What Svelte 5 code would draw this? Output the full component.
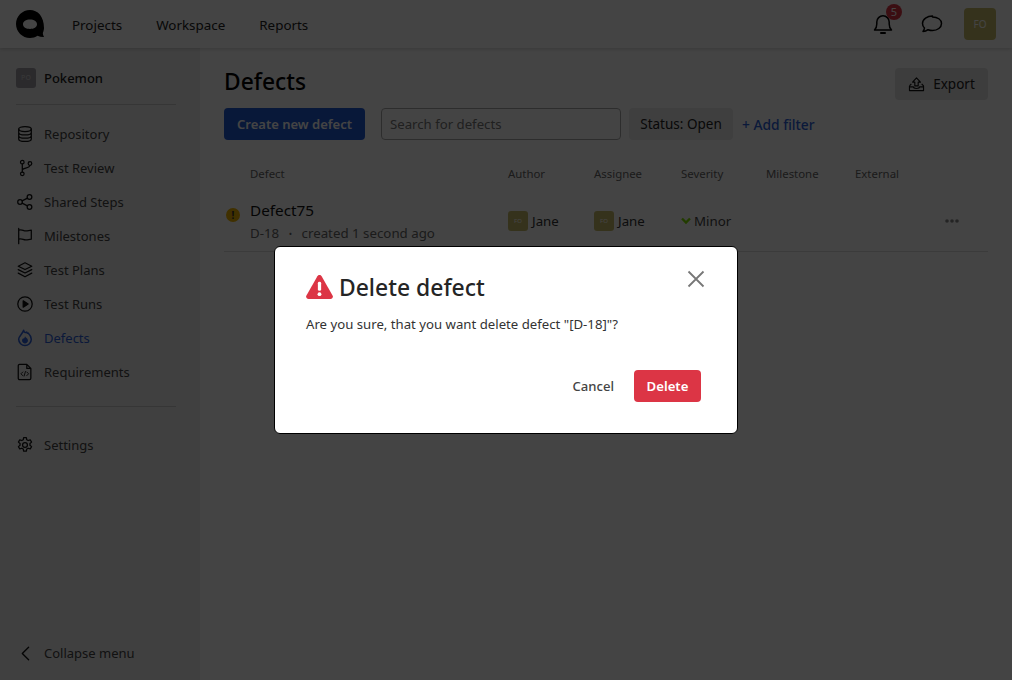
<script lang="ts">
	const nav = ['Projects', 'Workspace', 'Reports'];
	const menu = [
		{ label: 'Repository', icon: 'db' },
		{ label: 'Test Review', icon: 'branch' },
		{ label: 'Shared Steps', icon: 'share' },
		{ label: 'Milestones', icon: 'flag' },
		{ label: 'Test Plans', icon: 'layers' },
		{ label: 'Test Runs', icon: 'play' },
		{ label: 'Defects', icon: 'flame', active: true },
		{ label: 'Requirements', icon: 'file' },
	];
	const columns = ['Defect', 'Author', 'Assignee', 'Severity', 'Milestone', 'External'];
</script>

{#snippet icon(name: string)}
	<svg class="menu-icon" viewBox="0 0 20 20" fill="none" stroke="currentColor" stroke-width="1.4" stroke-linecap="round" stroke-linejoin="round">
		{#if name === 'db'}
			<ellipse cx="10" cy="4.5" rx="7" ry="2.8" />
			<path d="M3 4.500v11c0 1.500 3.100 2.800 7 2.800s7-1.300 7-2.800v-11M3 8.200c0 1.500 3.100 2.800 7 2.800s7-1.300 7-2.800M3 11.900c0 1.500 3.100 2.800 7 2.800s7-1.300 7-2.800" />
		{:else if name === 'branch'}
			<circle cx="7" cy="3.500" r="2" />
			<circle cx="7" cy="16.500" r="2" />
			<circle cx="15.500" cy="5" r="2" />
			<path d="M7 5.500v9M7 12.500c0-3 8.300-1.500 8.500-5.500" />
		{:else if name === 'share'}
			<circle cx="4.500" cy="10" r="2.600" />
			<circle cx="15" cy="4.500" r="2.600" />
			<circle cx="15" cy="15.500" r="2.600" />
			<path d="M6.800 8.800l5.900-3.100M6.800 11.200l5.900 3.100" />
		{:else if name === 'flag'}
			<path d="M3 1.500v17M3 3.500c4-1.500 5 1 8 .8 2 0 4-.8 6-.8v10c-2 0-4 .8-6 .8-3 .2-4-2-8-.8" />
		{:else if name === 'layers'}
			<path d="M10 2l7.500 3.800L10 9.500 2.500 5.800zM2.500 9.600L10 13.300l7.500-3.700M2.500 13.500L10 17.500l7.500-4" />
		{:else if name === 'play'}
			<circle cx="10" cy="10" r="8" />
			<path d="M8 6.500l5.500 3.500L8 13.500z" fill="currentColor" />
		{:else if name === 'flame'}
			<path d="M8.500 1.500c.5 2.500 2 3 3.500 2 .2 1 .8 1.500 1.500 1 2 2 3.500 4.500 3.500 7 0 3.800-3.200 6.800-7 6.800s-7-3-7-6.800C3 7.500 7 6 8.500 1.500z" stroke-width="1.700" />
			<path d="M10 8c.5 1.500 3.300 2.200 3.300 4.800 0 1.800-1.500 3.200-3.300 3.200s-3.300-1.400-3.300-3.200c0-1 .6-1.800 1.200-2.500.5.700 1.600.5 2.100-2.300z" fill="currentColor" stroke="none" />
		{:else if name === 'file'}
			<path d="M4 1.500h8l4.500 4.500v11c0 .800-.700 1.500-1.500 1.500H4c-.800 0-1.500-.700-1.500-1.500V3c0-.800.700-1.500 1.500-1.500zM12 1.500V6h4.500" />
			<path d="M7.500 10l-2 2 2 2M12 10l2 2-2 2M10.500 9.500l-1.500 5" stroke-width="1" />
		{:else if name === 'gear'}
			<circle cx="10" cy="10" r="2.700" />
			<path d="M8.500 1.800h3l.5 2.400 1.500.8 2.300-.8 1.500 2.600-1.800 1.600v1.800l1.800 1.600-1.500 2.600-2.300-.8-1.500.8-.5 2.400h-3l-.5-2.400-1.500-.8-2.300.8-1.500-2.600 1.800-1.600V8.400L2.700 6.800l1.500-2.600 2.300.8 1.500-.8z" />
		{/if}
	</svg>
{/snippet}

<div class="page">
	<header class="topbar">
		<svg class="logo" viewBox="0 0 28 28">
			<path fill-rule="evenodd" d="M14 0C6.300 0 0 6.300 0 14s6.300 14 14 14c2.800 0 5.300-.8 7.500-2.200 2 .9 4.300 1.300 6.500 1.200-.8-1.200-1.100-2.600-1.200-4 .8-1.800 1.200-3.800 1.200-5C28 6.300 21.700 0 14 0zm0 9.500c4 0 7 1.800 7 4.800s-3 4.700-7 4.700-7-1.700-7-4.700 3-4.800 7-4.800z" />
		</svg>
		<nav class="top-nav">
			{#each nav as item}
				<span>{item}</span>
			{/each}
		</nav>
		<div class="top-actions">
			<div class="bell">
				<svg viewBox="0 0 20 22" fill="none" stroke="currentColor" stroke-width="1.500" stroke-linecap="round" stroke-linejoin="round">
					<path d="M1.500 17h17c-1.500-1.500-2.300-3-2.300-6V9a6.200 6.200 0 0 0-12.400 0v2c0 3-.800 4.500-2.300 6z" />
					<path d="M8 20h4" stroke-width="2" />
				</svg>
				<span class="bell-badge">5</span>
			</div>
			<svg class="chat" viewBox="0 0 22 20" fill="none" stroke="currentColor" stroke-width="1.500" stroke-linejoin="round">
				<path d="M11.500 2C6.300 2 1.500 5 1.500 9.500c0 2 .9 3.500 2 4.500-.2 1.500-1 2.800-1.500 3.500 2 0 3.800-.8 5-1.800 1.400.5 3 .8 4.500.8 5 0 9-3 9-7s-4-6.500-9-6.500z" />
			</svg>
			<div class="avatar">FO</div>
		</div>
	</header>

	<div class="body">
		<aside class="sidebar">
			<div class="project">
				<span class="project-badge">PO</span>
				<span>Pokemon</span>
			</div>
			<div class="divider"></div>
			<ul class="menu">
				{#each menu as item}
					<li class:active={item.active}>
						{@render icon(item.icon)}
						<span>{item.label}</span>
					</li>
				{/each}
			</ul>
			<div class="divider second"></div>
			<div class="menu-row settings">
				{@render icon('gear')}
				<span>Settings</span>
			</div>
			<div class="menu-row collapse">
				<svg class="menu-icon" viewBox="0 0 20 20" fill="none" stroke="currentColor" stroke-width="1.500" stroke-linecap="round" stroke-linejoin="round">
					<path d="M14 3.500L7 10.500l7 7" />
				</svg>
				<span>Collapse menu</span>
			</div>
		</aside>

		<main class="content">
			<div class="title-row">
				<h1>Defects</h1>
				<button class="export">
					<svg viewBox="0 0 18 16" fill="none" stroke="currentColor" stroke-width="1.200" stroke-linejoin="round">
						<path d="M9 1L4.800 5.500h2.400v4h3.600v-4h2.400zM1.500 9.500v5h15v-5l-2-2.200M1.500 9.500l2-2.200M1.500 10.500h4.200c0 1.200 1 1.800 3.300 1.800s3.300-.6 3.300-1.800h4.200" />
					</svg>
					Export
				</button>
			</div>
			<div class="toolbar">
				<button class="primary">Create new defect</button>
				<input class="search" placeholder="Search for defects" />
				<span class="status">Status: Open</span>
				<span class="add-filter">+ Add filter</span>
			</div>
			<div class="grid head">
				<span></span>
				{#each columns as col}
					<span>{col}</span>
				{/each}
			</div>
			<div class="grid row">
				<span class="warn">!</span>
				<div class="defect">
					<div class="defect-name">Defect75</div>
					<div class="defect-meta">D-18 <i>•</i> created 1 second ago</div>
				</div>
				<div class="person"><span class="mini">FO</span>Jane</div>
				<div class="person"><span class="mini">FO</span>Jane</div>
				<div class="severity">
					<svg viewBox="0 0 10 8" fill="none" stroke="currentColor" stroke-width="2.400"><path d="M1 1.500l4 4 4-4" /></svg>
					Minor
				</div>
				<span></span>
				<span></span>
				<svg class="dots" viewBox="0 0 14 4" fill="currentColor">
					<circle cx="2" cy="2" r="1.800" />
					<circle cx="7" cy="2" r="1.800" />
					<circle cx="12" cy="2" r="1.800" />
				</svg>
			</div>
		</main>
	</div>

	<div class="overlay">
		<div class="modal">
			<div class="modal-head">
				<svg class="alert" viewBox="0 0 28 25">
					<path d="M14 0c.9 0 1.700.5 2.200 1.300l11.400 20c.9 1.600-.2 3.700-2.200 3.700H2.600C.6 25-.5 22.900.4 21.300l11.400-20C12.300.5 13.100 0 14 0z" fill="#dc3545" />
					<rect x="12.300" y="7" width="3.400" height="9.500" rx="1.500" fill="#fff" />
					<circle cx="14" cy="20" r="2" fill="#fff" />
				</svg>
				<h2>Delete defect</h2>
				<svg class="close" viewBox="0 0 18 18" fill="none" stroke="currentColor" stroke-width="1.800"><path d="M1.500 1.500l15 15M16.500 1.500l-15 15" /></svg>
			</div>
			<p>Are you sure, that you want delete defect "[D-18]"?</p>
			<div class="modal-actions">
				<button class="cancel">Cancel</button>
				<button class="delete">Delete</button>
			</div>
		</div>
	</div>
</div>

<style>
	:global(body) {
		margin: 0;
		font-family: 'Noto Sans', sans-serif;
	}

	.page {
		position: relative;
		width: 1012px;
		height: 680px;
		overflow: hidden;
		background: #fff;
		color: #1a1a1a;
		display: flex;
		flex-direction: column;
	}

	.topbar {
		height: 48px;
		flex: none;
		display: flex;
		align-items: center;
		padding: 0 16px;
		box-shadow: 0 1px 4px rgba(0, 0, 0, 0.18);
		position: relative;
	}

	.logo {
		width: 28px;
		height: 28px;
		fill: #000;
	}

	.top-nav {
		display: flex;
		gap: 34px;
		margin-left: 28px;
		padding-top: 1px;
		font-size: 13.4px;
		color: #222;
	}

	.top-actions {
		margin-left: auto;
		display: flex;
		align-items: center;
	}

	.bell {
		position: relative;
		width: 20px;
		height: 22px;
		color: #000;
	}

	.bell svg {
		display: block;
		width: 20px;
		height: 22px;
	}

	.bell-badge {
		position: absolute;
		top: -9px;
		left: 13px;
		width: 16px;
		height: 16px;
		border-radius: 50%;
		background: #dc3545;
		color: #fff;
		font-size: 11px;
		line-height: 16px;
		text-align: center;
	}

	.chat {
		width: 22px;
		height: 20px;
		margin-left: 28px;
		color: #000;
	}

	.avatar {
		width: 32px;
		height: 32px;
		margin-left: 21px;
		border-radius: 4px;
		background: #c8bb6a;
		color: #fff;
		font-size: 10px;
		line-height: 32px;
		text-align: center;
	}

	.body {
		flex: 1;
		display: flex;
		min-height: 0;
	}

	.sidebar {
		width: 200px;
		flex: none;
		box-sizing: border-box;
		padding: 20px 24px 0 16px;
		background: #f0f0f0;
		display: flex;
		flex-direction: column;
		font-size: 13px;
		color: #444;
	}

	.project {
		display: flex;
		align-items: center;
		gap: 8px;
		height: 20px;
		font-weight: 500;
		color: #222;
	}

	.project-badge {
		width: 20px;
		height: 20px;
		border-radius: 3px;
		background: #a09ca6;
		color: #ccc;
		font-size: 7px;
		line-height: 20px;
		text-align: center;
	}

	.divider {
		height: 1px;
		background: #ccc;
		margin-top: 16px;
	}

	.menu {
		list-style: none;
		margin: 12px 0 0;
		padding: 0;
	}

	.menu li,
	.menu-row {
		height: 34px;
		display: flex;
		align-items: center;
		gap: 10px;
	}

	.menu li.active {
		color: #2b5fd9;
	}

	.menu-icon {
		width: 18px;
		height: 18px;
		flex: none;
		color: #111;
	}

	.active .menu-icon {
		color: #2b5fd9;
	}

	.divider.second {
		margin-top: 17px;
	}

	.settings {
		margin-top: 21px;
	}

	.collapse {
		margin-top: auto;
		margin-bottom: 10px;
	}

	.content {
		flex: 1;
		min-width: 0;
		padding: 0 24px;
	}

	.title-row {
		display: flex;
		align-items: flex-start;
		justify-content: space-between;
		box-sizing: border-box;
		height: 60px;
		padding-top: 20px;
	}

	h1 {
		margin: 0;
		font-size: 22.8px;
		line-height: 28px;
		font-weight: 500;
		color: #000;
	}

	button {
		font: inherit;
		border: 0;
	}

	.export {
		display: flex;
		align-items: center;
		justify-content: center;
		gap: 8px;
		width: 93px;
		height: 32px;
		padding: 0;
		border-radius: 4px;
		background: #e4e4e4;
		font-size: 13.5px;
		color: #222;
	}

	.export svg {
		width: 17px;
		height: 15px;
		color: #111;
	}

	.toolbar {
		display: flex;
		align-items: center;
		height: 32px;
	}

	.primary {
		width: 141px;
		height: 32px;
		padding: 0;
		border-radius: 4px;
		background: #1f5ad6;
		color: #fff;
		font-size: 13px;
		font-weight: 600;
	}

	.search {
		box-sizing: border-box;
		width: 240px;
		height: 32px;
		margin-left: 16px;
		padding: 0 8px;
		border: 1px solid #aaa;
		border-radius: 4px;
		background: transparent;
		font: inherit;
		font-size: 13.2px;
	}

	.search::placeholder {
		color: #777;
	}

	.status {
		margin-left: 8px;
		width: 104px;
		height: 32px;
		border-radius: 4px;
		background: #ececec;
		font-size: 13.5px;
		line-height: 32px;
		text-align: center;
		color: #222;
	}

	.add-filter {
		margin-left: 9px;
		padding-top: 1px;
		font-size: 13.8px;
		font-weight: 500;
		color: #2b5fd9;
	}

	.grid {
		display: grid;
		grid-template-columns: 26px 258px 86px 87px 85px 89px 1fr;
	}

	.head {
		margin-top: 25px;
		font-size: 11.4px;
		line-height: 18px;
		color: #666;
	}

	.row {
		grid-template-columns: 26px 258px 86px 87px 85px 89px 1fr 43px;
		margin-top: 10px;
		height: 59px;
		box-sizing: border-box;
		padding-bottom: 3px;
		border-bottom: 1px solid #ddd;
		align-items: center;
		font-size: 13.3px;
		color: #333;
	}

	.warn {
		align-self: start;
		width: 14px;
		height: 14px;
		margin: 15px 0 0 2px;
		border-radius: 50%;
		background: #f0b400;
		color: #333;
		font-size: 10px;
		font-weight: 700;
		line-height: 14px;
		text-align: center;
	}

	.defect {
		padding-top: 5px;
	}

	.defect-name {
		color: #111;
		font-size: 15.3px;
		line-height: 20px;
	}

	.defect-meta {
		font-size: 13.3px;
		line-height: 27px;
		color: #666;
	}

	.defect-meta i {
		font-style: normal;
		font-size: 9px;
		margin: 0 6px;
		vertical-align: 1px;
	}

	.person {
		display: flex;
		align-items: center;
		gap: 4px;
	}

	.mini {
		width: 20px;
		height: 20px;
		border-radius: 3px;
		background: #c8bb6a;
		color: #fff;
		font-size: 6px;
		line-height: 20px;
		text-align: center;
	}

	.severity {
		display: flex;
		align-items: center;
		gap: 3px;
		color: #444;
	}

	.severity svg {
		width: 10px;
		height: 8px;
		color: #80e000;
	}

	.dots {
		width: 14px;
		height: 4px;
		color: #888;
	}

	.overlay {
		position: absolute;
		inset: 0;
		background: rgba(0, 0, 0, 0.733);
		display: flex;
		justify-content: center;
		align-items: flex-start;
		padding-top: 246px;
		box-sizing: border-box;
	}

	.modal {
		box-sizing: border-box;
		width: 464px;
		height: 188px;
		padding: 24px 32px 24px 31px;
		background: #fff;
		border: 1px solid #000;
		border-radius: 6px;
	}

	.modal-head {
		display: flex;
		align-items: center;
		gap: 6px;
		height: 32px;
	}

	.alert {
		width: 27px;
		height: 24px;
	}

	h2 {
		margin: 0;
		font-size: 22.9px;
		font-weight: 500;
		color: #252525;
	}

	.close {
		width: 18px;
		height: 18px;
		margin-left: auto;
		margin-top: -16px;
		color: #777;
	}

	p {
		margin: 11px 0 0;
		font-size: 13.2px;
		line-height: 20px;
		color: #333;
	}

	.modal-actions {
		display: flex;
		justify-content: flex-end;
		align-items: center;
		margin-top: 36px;
		margin-right: 4px;
		gap: 20px;
	}

	.cancel {
		background: none;
		padding: 0;
		font-size: 13.1px;
		font-weight: 500;
		color: #444;
	}

	.delete {
		width: 67px;
		height: 32px;
		padding: 0;
		border-radius: 4px;
		background: #dc3545;
		color: #fff;
		font-size: 13.2px;
		font-weight: 600;
	}
</style>
